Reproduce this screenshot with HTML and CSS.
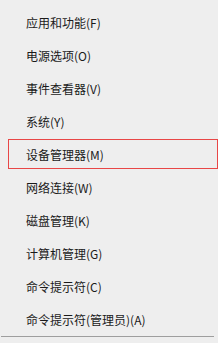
FILE: index.html
```html
<!DOCTYPE html>
<html lang="zh-CN">
<head>
<meta charset="utf-8">
<title>菜单</title>
<link rel="stylesheet" href="styles.css">
</head>
<body>
<ul class="menu">
  <li class="item">应用和功能(F)</li>
  <li class="item">电源选项(O)</li>
  <li class="item">事件查看器(V)</li>
  <li class="item">系统(Y)</li>
  <li class="item item-active">设备管理器(M)</li>
  <li class="item">网络连接(W)</li>
  <li class="item">磁盘管理(K)</li>
  <li class="item">计算机管理(G)</li>
  <li class="item">命令提示符(C)</li>
  <li class="item">命令提示符(管理员)(A)</li>
</ul>
<div class="separator"></div>
</body>
</html>
```
FILE: styles.css
```css
html, body {
  margin: 0;
  padding: 0;
  background: #eeeeee;
}
body {
  width: 218px;
  height: 343px;
  overflow: hidden;
  font-family: "Noto Sans CJK SC", "Noto Sans", sans-serif;
  font-size: 12px;
  color: #1a1a1a;
}
.menu {
  list-style: none;
  margin: 0;
  padding: 7px 0 0 8px;
  display: flex;
  flex-direction: column;
  gap: 3px;
}
.item {
  box-sizing: border-box;
  height: 30px;
  border: 1px solid transparent;
  padding-left: 17px;
  display: flex;
  align-items: center;
  white-space: nowrap;
}
.item-active {
  border-color: #e84646;
}
.separator {
  margin: 2px 0 0 1px;
  width: 213px;
  height: 1px;
  background: #9e9e9e;
}
```
